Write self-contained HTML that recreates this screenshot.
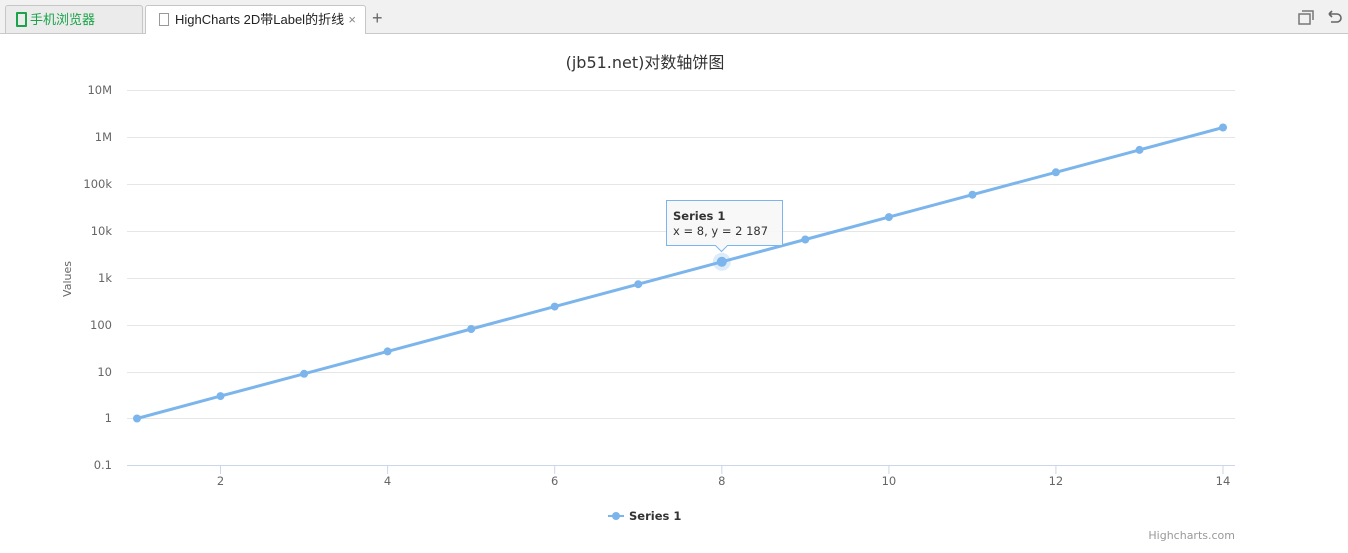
<!DOCTYPE html>
<html><head><meta charset="utf-8"><style>
body{margin:0;width:1348px;height:553px;background:#fff;overflow:hidden;font-family:"Liberation Sans","Noto Sans CJK SC",sans-serif}
.bar{position:absolute;left:0;top:0;width:1348px;height:33px;background:#f1f1f1;border-bottom:1px solid #c9c9c9}
.tab{position:absolute;top:5px;height:28px;border:1px solid #c6c6c6;border-bottom:none;border-radius:3px 3px 0 0;font-size:13px;line-height:28px;box-sizing:border-box}
</style></head><body>
<div class="bar">
<div class="tab" style="left:5px;width:138px;background:#ebebeb;color:#1aa34a;padding-left:10px"><span style="display:inline-block;width:7px;height:11px;border:2px solid #1aa34a;border-radius:1px;vertical-align:-3px;margin-right:3px"></span>手机浏览器</div>
<div class="tab" style="left:145px;width:221px;background:#fff;height:29px;color:#222;padding-left:13px"><span style="display:inline-block;width:8px;height:11px;border:1px solid #999;vertical-align:-2px;margin-right:6px"></span>HighCharts 2D带Label的折线<span style="color:#888;position:absolute;right:9px">×</span></div>
<div style="position:absolute;left:372px;top:8px;font-size:18px;color:#666">+</div>
<svg style="position:absolute;left:1296px;top:10px" width="50" height="20"><rect x="3" y="4" width="11" height="10" fill="none" stroke="#777" stroke-width="1.5"/><path d="M6 1h11v9" fill="none" stroke="#777" stroke-width="1.5"/><path d="M33 4h8a4 4 0 0 1 0 8h-6M33 4l3-3M33 4l3 3" fill="none" stroke="#666" stroke-width="1.6"/></svg>
</div>
<svg style="position:absolute;left:0;top:0" width="1348" height="553" font-family="DejaVu Sans, Liberation Sans, sans-serif">
<text x="645" y="68" text-anchor="middle" font-size="16" fill="#333" font-family="DejaVu Sans, Noto Sans CJK SC, sans-serif">(jb51.net)对数轴饼图</text>
<g stroke="#e6e6e6" stroke-width="1">
<path d="M127 90.5H1235M127 137.5H1235M127 184.5H1235M127 231.5H1235M127 278.5H1235M127 325.5H1235M127 372.5H1235M127 418.5H1235"/>
</g>
<path d="M127 465.5H1235" stroke="#ccd6eb"/>
<g stroke="#ccd6eb"><path d="M220.5 466v8M387.6 466v8M554.7 466v8M721.8 466v8M888.9 466v8M1055.9 466v8M1223 466v8"/></g>
<g font-size="11.5" fill="#666" text-anchor="end">
<text x="112" y="94">10M</text><text x="112" y="141">1M</text><text x="112" y="188">100k</text><text x="112" y="235">10k</text><text x="112" y="282">1k</text><text x="112" y="329">100</text><text x="112" y="376">10</text><text x="112" y="422">1</text><text x="112" y="469">0.1</text>
</g>
<g font-size="11.5" fill="#666" text-anchor="middle">
<text x="220.5" y="485">2</text><text x="387.6" y="485">4</text><text x="554.7" y="485">6</text><text x="721.8" y="485">8</text><text x="888.9" y="485">10</text><text x="1055.9" y="485">12</text><text x="1223" y="485">14</text>
</g>
<text transform="translate(71,279) rotate(-90)" text-anchor="middle" font-size="11" fill="#666">Values</text>
<polyline fill="none" stroke="#7cb5ec" stroke-width="3" points="137,418.5 220.5,396.1 304.1,373.8 387.6,351.4 471.2,329 554.7,306.6 638.2,284.2 721.8,261.8 805.3,239.5 888.9,217.1 972.4,194.7 1055.9,172.3 1139.5,149.9 1223,127.5"/>
<g fill="#7cb5ec">
<circle cx="137" cy="418.5" r="4"/><circle cx="220.5" cy="396.1" r="4"/><circle cx="304.1" cy="373.8" r="4"/><circle cx="387.6" cy="351.4" r="4"/><circle cx="471.2" cy="329" r="4"/><circle cx="554.7" cy="306.6" r="4"/><circle cx="638.2" cy="284.2" r="4"/><circle cx="721.8" cy="261.8" r="9" fill="#7cb5ec" opacity="0.25"/><circle cx="721.8" cy="261.8" r="5"/><circle cx="805.3" cy="239.5" r="4"/><circle cx="888.9" cy="217.1" r="4"/><circle cx="972.4" cy="194.7" r="4"/><circle cx="1055.9" cy="172.3" r="4"/><circle cx="1139.5" cy="149.9" r="4"/><circle cx="1223" cy="127.5" r="4"/>
</g>
<path d="M666.5 200.5h116v45h-55l-6 6-6-6h-49z" fill="#f7f7f7" fill-opacity="0.9" stroke="#7cb5ec"/>
<text x="673" y="220" font-size="11.5" font-weight="bold" fill="#333">Series 1</text>
<text x="673" y="235" font-size="11.5" fill="#333">x = 8, y = 2 187</text>
<path d="M608 516h16" stroke="#7cb5ec" stroke-width="2"/><circle cx="616" cy="516" r="4" fill="#7cb5ec"/>
<text x="629" y="520" font-size="11.5" font-weight="bold" fill="#333">Series 1</text>
<text x="1235" y="539" text-anchor="end" font-size="11" fill="#999">Highcharts.com</text>
</svg>
</body></html>
